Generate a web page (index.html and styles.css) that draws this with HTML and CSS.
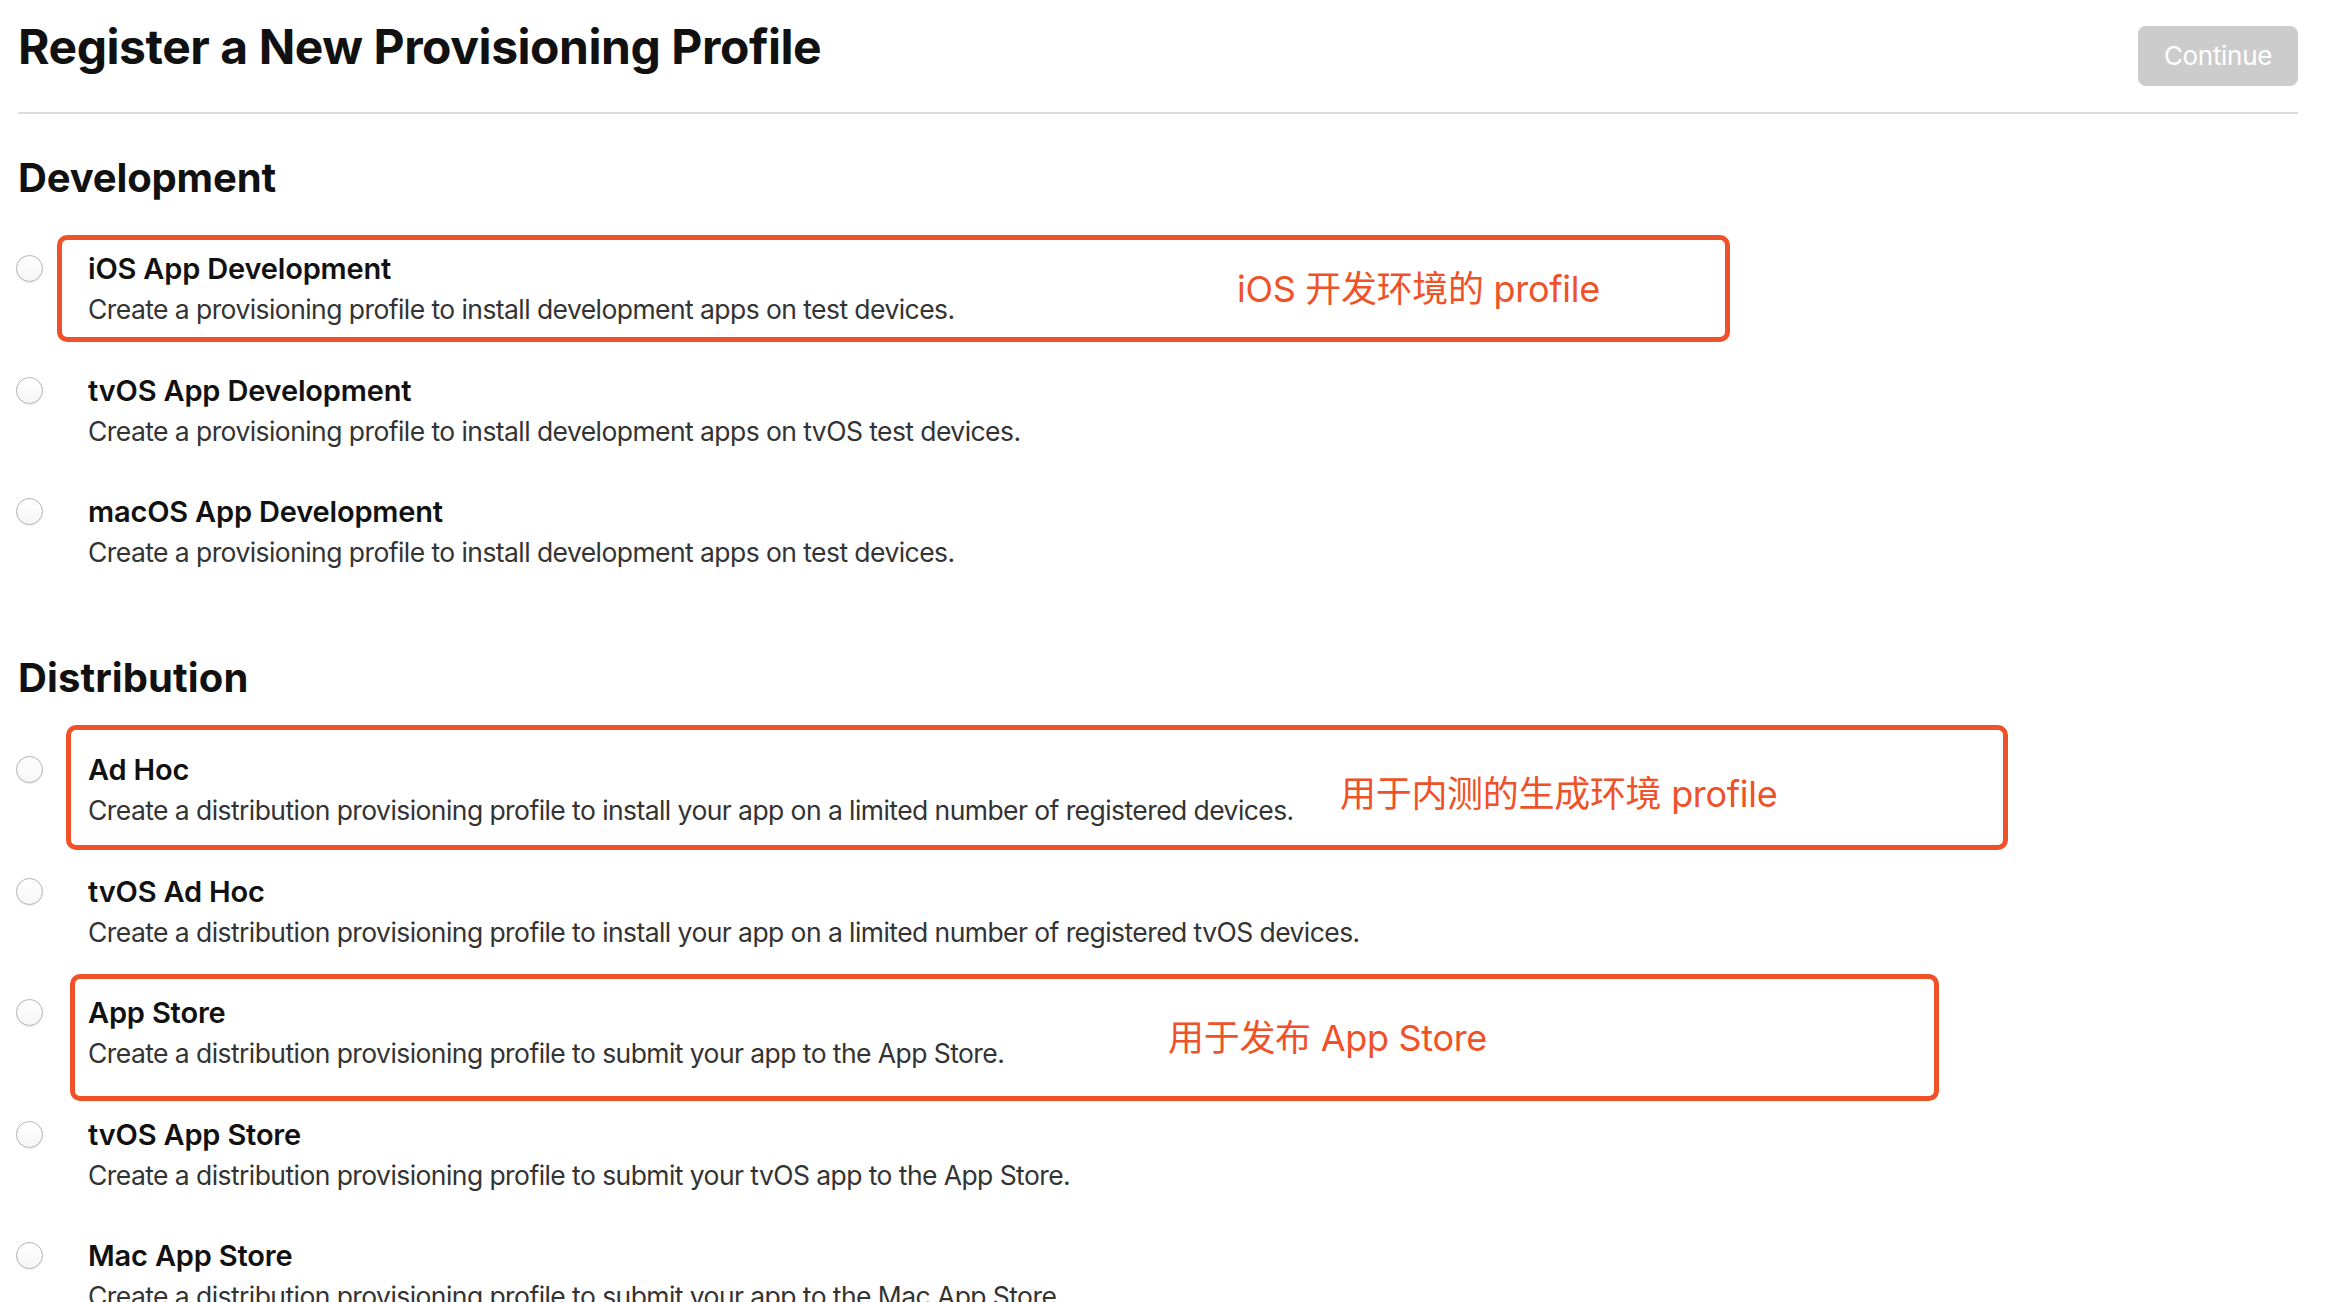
FILE: index.html
```html
<!DOCTYPE html>
<html lang="en">
<head>
<meta charset="utf-8">
<title>Register a New Provisioning Profile</title>
<link rel="stylesheet" href="styles.css">
</head>
<body>
<main class="page">
  <header class="page-header">
    <h1 class="page-title">Register a New Provisioning Profile</h1>
    <button class="btn-continue" type="button" disabled>Continue</button>
  </header>

  <section class="group group-dev">
    <h2 class="group-title">Development</h2>
    <ul class="options">
      <li class="option">
        <input class="radio" type="radio" name="ptype">
        <div class="option-text">
          <div class="option-name">iOS App Development</div>
          <div class="option-desc">Create a provisioning profile to install development apps on test devices.</div>
        </div>
        <div class="mark mark-ios"></div>
        <div class="note note-ios">iOS 开发环境的 profile</div>
      </li>
      <li class="option">
        <input class="radio" type="radio" name="ptype">
        <div class="option-text">
          <div class="option-name">tvOS App Development</div>
          <div class="option-desc">Create a provisioning profile to install development apps on tvOS test devices.</div>
        </div>
      </li>
      <li class="option">
        <input class="radio" type="radio" name="ptype">
        <div class="option-text">
          <div class="option-name">macOS App Development</div>
          <div class="option-desc">Create a provisioning profile to install development apps on test devices.</div>
        </div>
      </li>
    </ul>
  </section>

  <section class="group group-dist">
    <h2 class="group-title">Distribution</h2>
    <ul class="options">
      <li class="option">
        <input class="radio" type="radio" name="ptype">
        <div class="option-text">
          <div class="option-name">Ad Hoc</div>
          <div class="option-desc">Create a distribution provisioning profile to install your app on a limited number of registered devices.</div>
        </div>
        <div class="mark mark-adhoc"></div>
        <div class="note note-adhoc">用于内测的生成环境 profile</div>
      </li>
      <li class="option">
        <input class="radio" type="radio" name="ptype">
        <div class="option-text">
          <div class="option-name">tvOS Ad Hoc</div>
          <div class="option-desc">Create a distribution provisioning profile to install your app on a limited number of registered tvOS devices.</div>
        </div>
      </li>
      <li class="option">
        <input class="radio" type="radio" name="ptype">
        <div class="option-text">
          <div class="option-name">App Store</div>
          <div class="option-desc">Create a distribution provisioning profile to submit your app to the App Store.</div>
        </div>
        <div class="mark mark-store"></div>
        <div class="note note-store">用于发布 App Store</div>
      </li>
      <li class="option">
        <input class="radio" type="radio" name="ptype">
        <div class="option-text">
          <div class="option-name">tvOS App Store</div>
          <div class="option-desc">Create a distribution provisioning profile to submit your tvOS app to the App Store.</div>
        </div>
      </li>
      <li class="option">
        <input class="radio" type="radio" name="ptype">
        <div class="option-text">
          <div class="option-name">Mac App Store</div>
          <div class="option-desc">Create a distribution provisioning profile to submit your app to the Mac App Store.</div>
        </div>
      </li>
    </ul>
  </section>
</main>
</body>
</html>
```
FILE: styles.css
```css
html, body {
  margin: 0;
  padding: 0;
  background: #fff;
  overflow: hidden;
}

body {
  font-family: "Inter", "Noto Sans CJK SC", sans-serif;
  color: #111;
}

.page {
  padding: 0 30px 0 18px;
}

.page-header {
  display: flex;
  justify-content: space-between;
  align-items: flex-start;
  padding: 18px 0 26px;
  border-bottom: 2px solid #dcdcdc;
}

.page-title {
  margin: 0;
  font-size: 48px;
  line-height: 58px;
  font-weight: 700;
  letter-spacing: -0.45px;
  color: #111;
}

.btn-continue {
  margin-top: 8px;
  width: 160px;
  height: 60px;
  border: 0;
  border-radius: 8px;
  background: #cccccc;
  color: #fff;
  font-family: "Inter", sans-serif;
  font-size: 26px;
  font-weight: 400;
  letter-spacing: -0.3px;
  padding: 0 0 2px;
}

.group-title {
  margin: 0;
  font-size: 40px;
  line-height: 48px;
  font-weight: 700;
  letter-spacing: -0.15px;
  color: #111;
}

.group-dist .group-title {
  letter-spacing: 0.1px;
}

.group-dev {
  margin-top: 40px;
}

.group-dist {
  margin-top: 85px;
}

.options {
  list-style: none;
  margin: 0;
  padding: 0;
  display: flex;
  flex-direction: column;
  gap: 46.5px;
}

.group-dev .options {
  margin-top: 49px;
}

.group-dist .options {
  margin-top: 50px;
}

.option {
  position: relative;
  display: grid;
  grid-template-columns: 70px 1fr;
  align-items: start;
}

.radio {
  appearance: none;
  -webkit-appearance: none;
  margin: 4px 0 0 -2px;
  width: 27px;
  height: 27px;
  border-radius: 50%;
  border: 1px solid #b2b2b2;
  background: linear-gradient(#ffffff, #f6f6f6);
  box-shadow: 0 1px 1px rgba(0, 0, 0, 0.08);
  box-sizing: border-box;
}

.option-name {
  font-size: 29px;
  line-height: 36px;
  font-weight: 600;
  letter-spacing: -0.17px;
  color: #111;
}

.option-desc {
  margin-top: 5px;
  font-size: 26.5px;
  line-height: 34px;
  font-weight: 400;
  letter-spacing: -0.57px;
  color: #333;
}

/* annotation overlays */
.mark {
  position: absolute;
  border: 5px solid #ef5228;
  border-radius: 10px;
  box-sizing: border-box;
  pointer-events: none;
}

.mark-ios {
  left: 39px;
  top: -16.5px;
  width: 1673px;
  height: 107px;
}

.mark-adhoc {
  left: 48px;
  top: -27.5px;
  width: 1942px;
  height: 125px;
}

.mark-store {
  left: 52px;
  top: -21.5px;
  width: 1869px;
  height: 127px;
}

.note {
  position: absolute;
  font-family: "Inter", "Noto Sans CJK SC", sans-serif;
  font-size: 36px;
  line-height: 44px;
  font-weight: 400;
  letter-spacing: -0.3px;
  color: #ef5228;
  white-space: nowrap;
}

.note-ios {
  left: 1219px;
  top: 15.5px;
}

.note-adhoc {
  left: 1322px;
  top: 19.5px;
}

.note-store {
  left: 1150px;
  top: 20.5px;
}
```
